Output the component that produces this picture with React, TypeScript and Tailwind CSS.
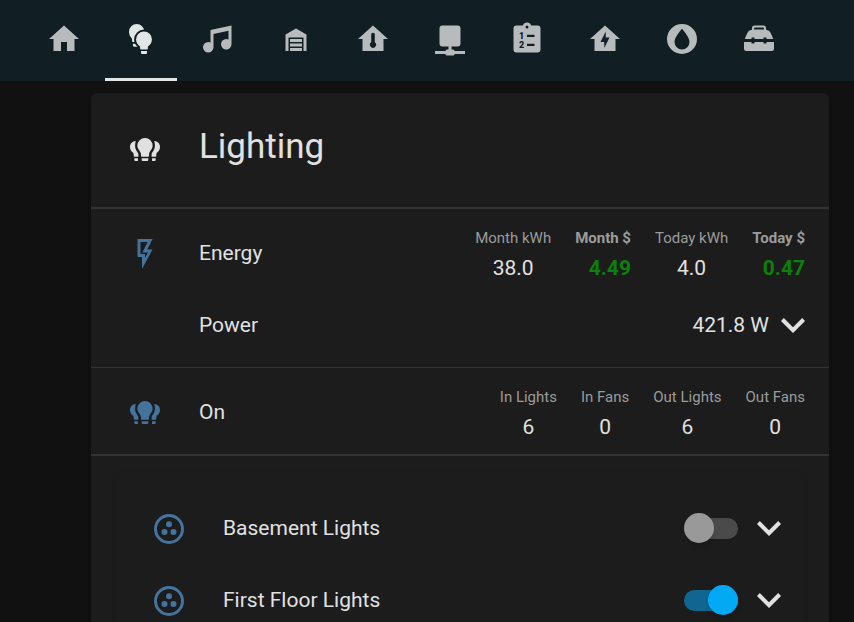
import type { ReactNode } from "react";

const FONT = "font-['Roboto','Noto_Sans',sans-serif]";

function Icon({ children }: { children: ReactNode }) {
  return (
    <svg viewBox="0 0 24 24" className="size-9 shrink-0" fill="currentColor" aria-hidden="true">
      {children}
    </svg>
  );
}

const BULB =
  "M14 7A5.3 5.3 0 0 0 8.7 12.3C8.7 14.5 10 16 11.4 17V18.4Q11.4 19 12 19H16Q16.6 19 16.6 18.4V17C18 16 19.3 14.5 19.3 12.3A5.3 5.3 0 0 0 14 7Z";

function BulbPair() {
  return (
    <Icon>
      <path d="M9.1 2A5.1 5.1 0 0 0 4 7.1C4 9 4.9 10.6 6 11.8V13.3Q6 14 6.7 14H10L14.2 7.1A5.1 5.1 0 0 0 9.1 2ZM6.6 15.2H10V17.2H7.6Q6.6 17.2 6.6 16.2Z" />
      <path d={BULB} className="stroke-[#111e24]" strokeWidth="2.6" paintOrder="stroke" />
      <path d="M12 20H16V21.3Q16 22 15.3 22H12.7Q12 22 12 21.3Z" />
    </Icon>
  );
}

function BulbGroup() {
  return (
    <Icon>
      <path d="M5.8 6C3.5 6.1 2 7.9 2 10C2 11.7 2.8 12.8 3.9 13.7Q4.5 14.3 4.5 15V16Q4.5 16.5 5 16.5H7.6V15C7.6 13.4 5.4 12.5 5.4 9.2C5.4 8 5.6 7 5.8 6ZM4.9 17.5H7.3V19.4H5.6Q4.9 19.4 4.9 18.7Z" />
      <path d="M18.2 6C20.5 6.1 22 7.9 22 10C22 11.7 21.2 12.8 20.1 13.7Q19.5 14.3 19.5 15V16Q19.5 16.5 19 16.5H16.4V15C16.4 13.4 18.6 12.5 18.6 9.2C18.6 8 18.4 7 18.2 6ZM19.1 17.5H16.7V19.4H18.4Q19.1 19.4 19.1 18.7Z" />
      <path d="M12 4A5.1 5.1 0 0 0 6.9 9.1C6.9 11.5 9.3 13 9.3 14.8V15.9Q9.3 16.5 9.9 16.5H14.1Q14.7 16.5 14.7 15.9V14.8C14.7 13 17.1 11.5 17.1 9.1A5.1 5.1 0 0 0 12 4Z" />
      <path d="M9.8 17.5H14.2V18.7Q14.2 19.4 13.5 19.4H10.5Q9.8 19.4 9.8 18.7Z" />
    </Icon>
  );
}

const tabs: { name: string; icon: ReactNode }[] = [
  { name: "Home", icon: <Icon><path d="M10,20V14H14V20H19V12H22L12,3L2,12H5V20H10Z" /></Icon> },
  { name: "Lighting", icon: <BulbPair /> },
  {
    name: "Music",
    icon: (
      <Icon>
        <path d="M21,3V15.5A3.5,3.5 0 0,1 17.5,19A3.5,3.5 0 0,1 14,15.5A3.5,3.5 0 0,1 17.5,12C18.04,12 18.55,12.12 19,12.34V6.47L9,8.6V17.5A3.5,3.5 0 0,1 5.5,21A3.5,3.5 0 0,1 2,17.5A3.5,3.5 0 0,1 5.5,14C6.04,14 6.55,14.12 7,14.34V6L21,3Z" />
      </Icon>
    ),
  },
  {
    name: "Garage",
    icon: (
      <Icon>
        <path d="M19,20H17V11H7V20H5V9L12,5L19,9V20M8,12H16V14H8V12M8,15H16V17H8V15M16,18V20H8V18H16Z" />
      </Icon>
    ),
  },
  {
    name: "Climate",
    icon: (
      <Icon>
        <path fillRule="evenodd" d="M12 3L2 12H5V20H19V12H22L12 3ZM12 7.8A1.2 1.2 0 0 1 13.2 9V14.2A2 2 0 1 1 10.8 14.2V9A1.2 1.2 0 0 1 12 7.8Z" />
      </Icon>
    ),
  },
  {
    name: "Network",
    icon: (
      <Icon>
        <path d="M17,3A2,2 0 0,1 19,5V15A2,2 0 0,1 17,17H13V19H14A1,1 0 0,1 15,20H22V22H15A1,1 0 0,1 14,23H10A1,1 0 0,1 9,22H2V20H9A1,1 0 0,1 10,19H11V17H7A2,2 0 0,1 5,15V5A2,2 0 0,1 7,3H17Z" />
      </Icon>
    ),
  },
  {
    name: "Lists",
    icon: (
      <Icon>
        <path fillRule="evenodd" d="M19,3H14.82C14.4,1.84 13.3,1 12,1C10.7,1 9.6,1.84 9.18,3H5A2,2 0 0,0 3,5V19A2,2 0 0,0 5,21H19A2,2 0 0,0 21,19V5A2,2 0 0,0 19,3ZM12,3A1,1 0 0,1 13,4A1,1 0 0,1 12,5A1,1 0 0,1 11,4A1,1 0 0,1 12,3ZM12 9.2H17V10.7H12ZM12 15.2H17V16.7H12Z" />
        <g className="fill-[#111e24] font-black" fontSize="6">
          <text x="6.7" y="12">1</text>
          <text x="6.7" y="18">2</text>
        </g>
      </Icon>
    ),
  },
  {
    name: "Energy",
    icon: (
      <Icon>
        <path fillRule="evenodd" d="M12 3L2 12H5V20H19V12H22L12 3ZM11.5 18V14H9L12.5 7V11H15L11.5 18Z" />
      </Icon>
    ),
  },
  {
    name: "Water",
    icon: (
      <Icon>
        <path fillRule="evenodd" d="M12 2A10 10 0 1 0 12 22A10 10 0 1 0 12 2ZM12 5.2C13.8 7.3 17 11.2 17 14A5 5 0 0 1 7 14C7 11.2 10.2 7.3 12 5.2Z" />
      </Icon>
    ),
  },
  {
    name: "Tools",
    icon: (
      <Icon>
        <path fillRule="evenodd" d="M9 3H15Q16.5 3 16.7 4.5V5.8Q18.6 6 19.3 7.2Q20.5 9.3 21.5 12H17V11H15V12H9V11H7V12H2.5Q3.5 9.3 4.7 7.2Q5.4 6 7.3 5.8V4.5Q7.5 3 9 3ZM9.2 4.3Q8.7 4.3 8.7 4.8V5.6H15.3V4.8Q15.3 4.3 14.8 4.3Z" />
        <path d="M2 14H7V15H9V14H15V15H17V14H22V18.5Q22 20 20.5 20H3.5Q2 20 2 18.5Z" />
      </Icon>
    ),
  },
];

function Expand({ label }: { label: string }) {
  return (
    <button type="button" aria-label={label} className="ml-3 flex h-9 w-6 items-center justify-center">
      <svg viewBox="6 8.58 12 7.42" className="h-[15px] w-6" fill="currentColor" aria-hidden="true">
        <path d="M7.41,8.58L12,13.17L16.59,8.58L18,10L12,16L6,10L7.41,8.58Z" />
      </svg>
    </button>
  );
}

function Row({ icon, name, children }: { icon?: ReactNode; name: ReactNode; children: ReactNode }) {
  return (
    <div className="flex h-15 items-center px-6">
      <div className="flex w-15 shrink-0 justify-center pt-0.5 text-[#44739e]">{icon}</div>
      <div className="ml-6 flex-1 text-[21px] leading-[30px]">{name}</div>
      {children}
    </div>
  );
}

type Reading = { label: string; value: string; money?: boolean };

function Readings({ items }: { items: Reading[] }) {
  return (
    <table className="text-center">
      <thead>
        <tr className="text-[15px] leading-[30px] text-[#9b9b9b]">
          {items.map((i) => (
            <th key={i.label} scope="col" className={i.money ? "pl-6 font-bold" : "pl-6 font-normal"}>
              {i.label}
            </th>
          ))}
        </tr>
      </thead>
      <tbody>
        <tr className="text-[21px] leading-[30px]">
          {items.map((i) => (
            <td key={i.label} className={i.money ? "pl-6 text-right font-bold text-[#0b800b]" : "pl-6"}>
              {i.value}
            </td>
          ))}
        </tr>
      </tbody>
    </table>
  );
}

function LightRow({ id, name, on }: { id: string; name: string; on?: boolean }) {
  return (
    <Row
      icon={
        <Icon>
          <circle cx="12" cy="12" r="9" fill="none" stroke="currentColor" strokeWidth="2" />
          <circle cx="12" cy="8.8" r="2" />
          <circle cx="9" cy="14" r="2" />
          <circle cx="15" cy="14" r="2" />
        </Icon>
      }
      name={<label htmlFor={id}>{name}</label>}
    >
      <input
        id={id}
        type="checkbox"
        role="switch"
        defaultChecked={on}
        className="flex h-[30px] w-[54px] shrink-0 appearance-none items-center before:h-[21px] before:w-[54px] before:shrink-0 before:rounded-full before:bg-[#4a4a4a] before:content-[''] after:-ml-[54px] after:size-[30px] after:shrink-0 after:rounded-full after:bg-[#999999] after:shadow-md after:content-[''] checked:before:bg-[#106691] checked:after:-ml-[30px] checked:after:bg-[#03a9f4]"
      />
      <div className="ml-[7px]">
        <Expand label={`Expand ${name}`} />
      </div>
    </Row>
  );
}

export default function App() {
  return (
    <div className={`${FONT} h-screen overflow-hidden bg-[#111111] text-[#e1e1e1]`}>
      <nav aria-label="Views" className="grid h-[81px] grid-cols-10 bg-[#111e24] pr-14 pl-[25px]">
        {tabs.map((tab) => (
          <a
            key={tab.name}
            href={`#${tab.name.toLowerCase()}`}
            aria-label={tab.name}
            aria-current={tab.name === "Lighting" ? "page" : undefined}
            className="mx-auto flex w-[72px] items-center justify-center border-b-[3px] border-transparent text-[#b7bbbd] aria-[current=page]:border-[#e1e5e6] aria-[current=page]:text-[#e1e5e6]"
          >
            {tab.icon}
          </a>
        ))}
      </nav>

      <main className="mt-3 mr-[25px] ml-[91px] rounded-md bg-[#1c1c1c] shadow-md">
        <header className="flex h-[114px] items-center px-6">
          <div className="flex w-15 shrink-0 justify-center">
            <BulbGroup />
          </div>
          <h1 className="ml-6 pb-1.5 text-[35px] leading-[54px]">Lighting</h1>
        </header>

        <section className="space-y-3 border-t-2 border-[#333333] pt-3.5 pb-3">
          <Row
            icon={
              <Icon>
                <path d="M7,2H17L13.5,9H17L10,22V14H7V2M9,4V12H12V14.66L14,11H10.24L13.76,4H9Z" />
              </Icon>
            }
            name="Energy"
          >
            <Readings
              items={[
                { label: "Month kWh", value: "38.0" },
                { label: "Month $", value: "4.49", money: true },
                { label: "Today kWh", value: "4.0" },
                { label: "Today $", value: "0.47", money: true },
              ]}
            />
          </Row>
          <Row name="Power">
            <span className="text-[21px] leading-[30px]">421.8 W</span>
            <Expand label="Expand Power" />
          </Row>
        </section>

        <section className="border-t border-[#333333] pt-3.5 pb-3">
          <Row icon={<BulbGroup />} name="On">
            <Readings
              items={[
                { label: "In Lights", value: "6" },
                { label: "In Fans", value: "0" },
                { label: "Out Lights", value: "6" },
                { label: "Out Fans", value: "0" },
              ]}
            />
          </Row>
        </section>

        <section className="border-t-2 border-[#333333] px-6 pt-4">
          <div className="space-y-3 rounded-md py-[26px] shadow-sm">
            <LightRow id="basement" name="Basement Lights" />
            <LightRow id="first-floor" name="First Floor Lights" on />
          </div>
        </section>
      </main>
    </div>
  );
}
